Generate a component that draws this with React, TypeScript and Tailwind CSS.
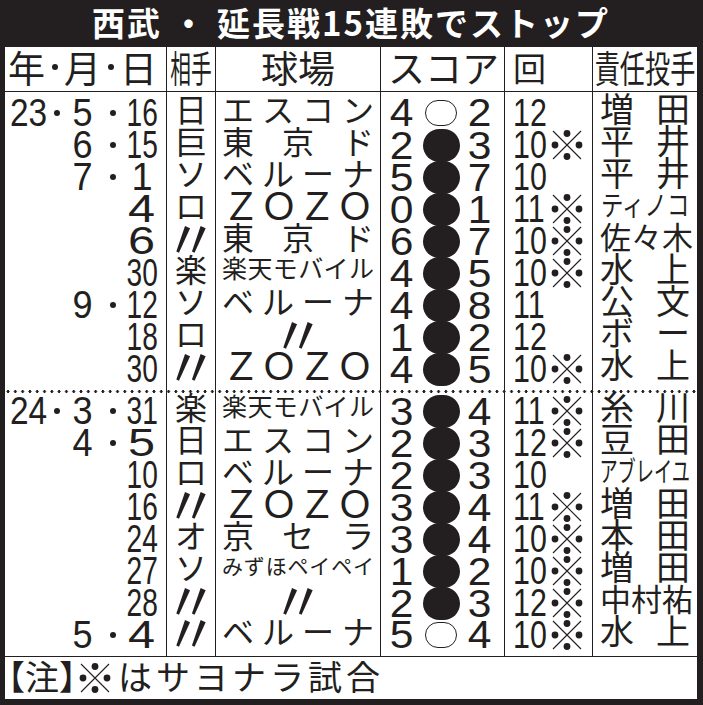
import React from "react";

type Cell = { t: string; c?: string; just?: boolean };

type Row = {
  y?: string;
  m?: string;
  d: string;
  team: string;
  park: Cell;
  a: string;
  b: string;
  win?: boolean;
  inn: string;
  sy?: boolean;
  p: Cell;
};

const INK = "#231f20";
const NUM = "font-['Liberation_Sans',Arial,sans-serif]";

// parks
const ES: Cell = { t: "エスコン", c: "text-[32px]", just: true };
const TD: Cell = { t: "東京ド", c: "text-[32px]", just: true };
const BL: Cell = { t: "ベルーナ", c: "text-[32px]", just: true };
const ZZ: Cell = { t: "ＺＯＺＯ", c: "text-[38px]", just: true };
const RK: Cell = { t: "楽天モバイル", c: "text-[25px]", just: true };
const KS: Cell = { t: "京セラ", c: "text-[32px]", just: true };
const MZ: Cell = { t: "みずほペイペイ", c: "text-[21px]", just: true };
const DT: Cell = { t: "〃" };

// pitchers
const pp = (t: string): Cell => ({ t, c: "text-[34px]", just: true });
const MASUDA = pp("増田");
const HIRAI = pp("平井");
const MIZUKAMI = pp("水上");
const TINOCO: Cell = { t: "ティノコ", c: "text-[28px] scale-x-[0.8]" };
const SASAKI: Cell = { t: "佐々木", c: "text-[31px]", just: true };
const ABREU: Cell = { t: "アブレイユ", c: "text-[28px] scale-x-[0.65]" };
const NAKAMURA: Cell = { t: "中村祐", c: "text-[31px]", just: true };

const S1: Row[] = [
  { y: "23", m: "5", d: "16", team: "日", park: ES, a: "4", b: "2", win: true, inn: "12", p: MASUDA },
  { m: "6", d: "15", team: "巨", park: TD, a: "2", b: "3", inn: "10", sy: true, p: HIRAI },
  { m: "7", d: "1", team: "ソ", park: BL, a: "5", b: "7", inn: "10", p: HIRAI },
  { d: "4", team: "ロ", park: ZZ, a: "0", b: "1", inn: "11", sy: true, p: TINOCO },
  { d: "6", team: "〃", park: TD, a: "6", b: "7", inn: "10", sy: true, p: SASAKI },
  { d: "30", team: "楽", park: RK, a: "4", b: "5", inn: "10", sy: true, p: MIZUKAMI },
  { m: "9", d: "12", team: "ソ", park: BL, a: "4", b: "8", inn: "11", p: pp("公文") },
  { d: "18", team: "ロ", park: DT, a: "1", b: "2", inn: "12", p: pp("ボー") },
  { d: "30", team: "〃", park: ZZ, a: "4", b: "5", inn: "10", sy: true, p: MIZUKAMI },
];

const S2: Row[] = [
  { y: "24", m: "3", d: "31", team: "楽", park: RK, a: "3", b: "4", inn: "11", sy: true, p: pp("糸川") },
  { m: "4", d: "5", team: "日", park: ES, a: "2", b: "3", inn: "12", sy: true, p: pp("豆田") },
  { d: "10", team: "ロ", park: BL, a: "2", b: "3", inn: "10", p: ABREU },
  { d: "16", team: "〃", park: ZZ, a: "3", b: "4", inn: "11", sy: true, p: MASUDA },
  { d: "24", team: "オ", park: KS, a: "3", b: "4", inn: "10", sy: true, p: pp("本田") },
  { d: "27", team: "ソ", park: MZ, a: "1", b: "2", inn: "10", sy: true, p: MASUDA },
  { d: "28", team: "〃", park: DT, a: "2", b: "3", inn: "12", sy: true, p: NAKAMURA },
  { m: "5", d: "4", team: "〃", park: BL, a: "5", b: "4", win: true, inn: "10", sy: true, p: MIZUKAMI },
];

const GRID = "grid grid-cols-[162px_49px_165px_124px_88px_104px]";

const Dot = () => <span className="block w-[6px] h-[6px] rounded-full bg-[#231f20]" />;

const Kome = () => (
  <svg width="34" height="32" viewBox="0 0 34 32" className="shrink-0">
    <path d="M3 2 L31 30 M31 2 L3 30" stroke={INK} strokeWidth="1.1" />
    <circle cx="17" cy="4.5" r="3.4" fill={INK} />
    <circle cx="17" cy="27.5" r="3.4" fill={INK} />
    <circle cx="5" cy="16" r="3.4" fill={INK} />
    <circle cx="29" cy="16" r="3.4" fill={INK} />
  </svg>
);

const Ditto = () => <span className="text-[54px] leading-none pb-[8px]">〃</span>;

function Fit({ cell, className }: { cell: Cell; className: string }) {
  if (cell.t === "〃")
    return (
      <div className={`flex items-center justify-center min-w-0 ${className}`}>
        <Ditto />
      </div>
    );
  if (cell.just)
    return (
      <div className={`flex items-center justify-between min-w-0 pb-[11px] ${className} ${cell.c}`}>
        {Array.from(cell.t).map((ch, i) => (
          <span key={i}>{ch}</span>
        ))}
      </div>
    );
  return (
    <div className={`flex items-center justify-center min-w-0 pb-[11px] ${className}`}>
      <span className={`inline-block whitespace-nowrap ${cell.c}`}>{cell.t}</span>
    </div>
  );
}

function dayScale(d: string) {
  if (d.length > 1) return "inline-block scale-x-[0.74]";
  if (d === "1") return "inline-block";
  return "inline-block scale-x-[1.28]";
}

const COL = "flex flex-col min-w-0 py-[5px] border-r border-[#231f20]";

function Section({ rows, dotted }: { rows: Row[]; dotted?: boolean }) {
  return (
    <div
      className={`${GRID} leading-none ${
        dotted
          ? "bg-[radial-gradient(circle,#231f20_1.2px,transparent_1.7px)] bg-[length:7.3px_3px] bg-repeat-x bg-top"
          : ""
      }`}
    >
      <div className={COL}>
        {rows.map((r, i) => (
          <div
            key={i}
            className={`grid grid-cols-[45px_14px_38px_22px_36px] items-center h-[32px] text-[38px] leading-[32px] ${NUM}`}
          >
            <span className="pl-[5px]">
              <span className="inline-block scale-x-[0.88] origin-left">{r.y}</span>
            </span>
            <span className="flex justify-center">{r.y && <Dot />}</span>
            <span className="text-center">
              <span className="inline-block scale-x-[0.95]">{r.m}</span>
            </span>
            <span className="flex justify-center">{r.m && <Dot />}</span>
            <span className="flex justify-center">
              <span className={dayScale(r.d)}>{r.d}</span>
            </span>
          </div>
        ))}
      </div>
      <div className={COL}>
        {rows.map((r, i) => (
          <div key={i} className="flex items-center justify-center h-[32px] text-[32px]">
            {r.team === "〃" ? <Ditto /> : <span className="pb-[11px]">{r.team}</span>}
          </div>
        ))}
      </div>
      <div className={COL}>
        {rows.map((r, i) => (
          <Fit key={i} cell={r.park} className="h-[32px] px-[6px]" />
        ))}
      </div>
      <div className={COL}>
        {rows.map((r, i) => (
          <div
            key={i}
            className={`grid grid-cols-[42px_36px_42px] items-center h-[32px] text-[38px] leading-[32px] ${NUM}`}
          >
            <span className="text-center">
              <span className="inline-block scale-x-[1.12]">{r.a}</span>
            </span>
            <span className="flex justify-center">
              {r.win ? (
                <span className="block shrink-0 w-[32px] h-[26px] rounded-full border-[1.5px] border-[#231f20]" />
              ) : (
                <span className="block shrink-0 w-[37px] h-[33px] rounded-full bg-[#231f20]" />
              )}
            </span>
            <span className="text-center">
              <span className="inline-block scale-x-[1.12]">{r.b}</span>
            </span>
          </div>
        ))}
      </div>
      <div className={COL}>
        {rows.map((r, i) => (
          <div key={i} className="flex items-center h-[32px] text-[38px] leading-[32px]">
            <span className={`w-[45px] shrink-0 pl-[8px] ${NUM}`}>
              <span className="inline-block scale-x-[0.8] origin-left">{r.inn}</span>
            </span>
            {r.sy && <Kome />}
          </div>
        ))}
      </div>
      <div className="flex flex-col min-w-0 py-[5px]">
        {rows.map((r, i) => (
          <Fit key={i} cell={r.p} className="h-[32px] px-[7px]" />
        ))}
      </div>
    </div>
  );
}

const App = () => {
  return (
    <div className="w-[703px] h-[705px] overflow-hidden bg-[#231f20] flex flex-col pl-[5px] pr-[6px] pb-[6px] font-['Noto_Sans_CJK_JP','Noto_Sans',sans-serif]">
      <div className="h-[47px] shrink-0 flex items-center justify-center pb-[4px] text-white font-bold text-[33px] tracking-[2px] leading-[40px]">
        <span>西武</span>
        <span className="mx-[10px]">・</span>
        <span>延長戦15連敗でストップ</span>
      </div>

      <div className="flex-1 bg-white flex flex-col text-[#231f20]">
        <div className={`${GRID} h-[45px] shrink-0 border-b border-[#231f20] text-[37px] leading-none`}>
          <div className="flex items-center justify-between pl-[3px] pr-[9px] pb-[4px] border-r border-[#231f20]">
            <span>年</span>
            <Dot />
            <span>月</span>
            <Dot />
            <span>日</span>
          </div>
          <div className="flex items-center justify-center pb-[4px] border-r border-[#231f20]">
            <span className="inline-block whitespace-nowrap scale-x-[0.56]">相手</span>
          </div>
          <div className="flex items-center justify-center pb-[4px] border-r border-[#231f20]">球場</div>
          <div className="flex items-center justify-between px-[7px] pb-[4px] border-r border-[#231f20]">
            <span>ス</span>
            <span>コ</span>
            <span>ア</span>
          </div>
          <div className="flex items-center pl-[8px] pb-[4px] border-r border-[#231f20] text-[33px]">回</div>
          <div className="flex items-center justify-center pb-[4px] min-w-0">
            <span className="inline-block whitespace-nowrap scale-x-[0.68]">責任投手</span>
          </div>
        </div>

        <Section rows={S1} />
        <Section rows={S2} dotted />

        <div className="flex-1 border-t border-[#231f20] flex items-center pl-[3px] text-[34px] leading-none [font-feature-settings:'halt']">
          <span className="pb-[5px]">【注】</span>
          <span className="ml-[2px]">
            <Kome />
          </span>
          <span className="ml-[6px] pb-[5px] tracking-[4px]">はサヨナラ試合</span>
        </div>
      </div>
    </div>
  );
};

export default App;
